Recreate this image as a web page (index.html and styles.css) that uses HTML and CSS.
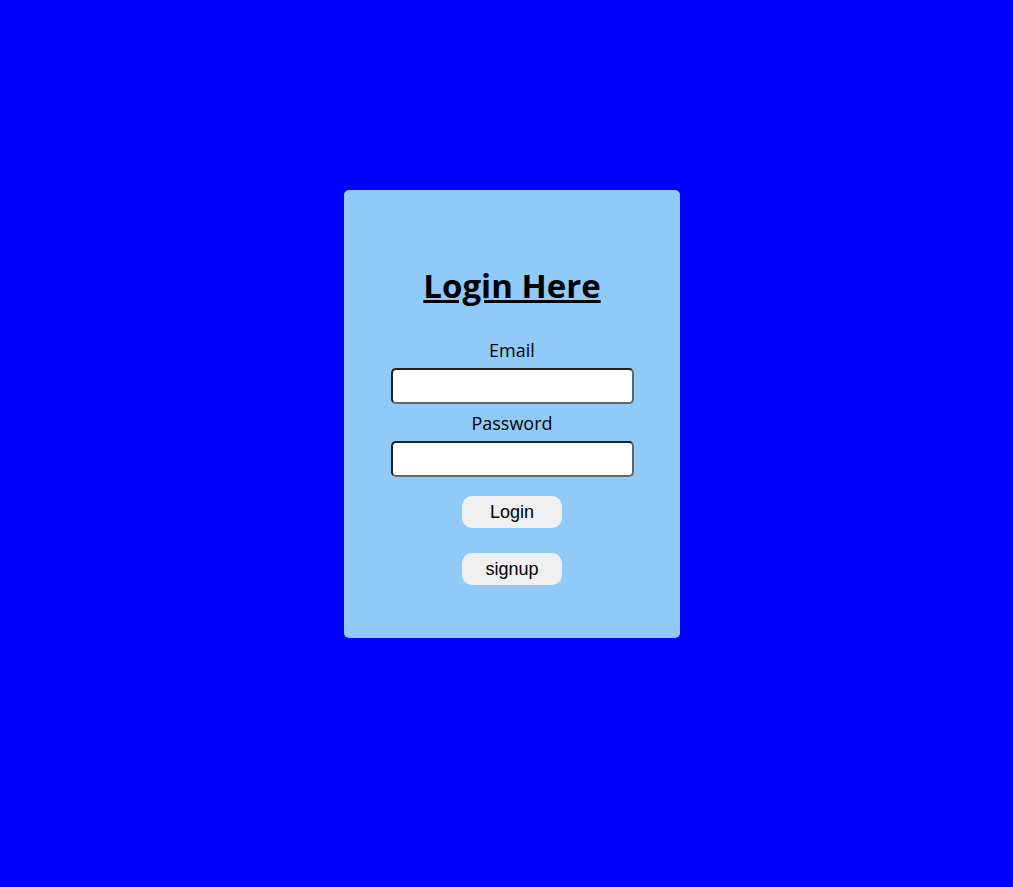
FILE: index.html
```html
<!DOCTYPE html>
<html>
<head>
<meta charset="utf-8">
<link rel="stylesheet" href="styles.css">
</head>
<body>
<div class="page">
  <div class="card">
    <h1 class="title">Login Here</h1>
    <form class="form">
      <label class="label" for="email">Email</label>
      <input class="field" id="email" type="email">
      <label class="label" for="password">Password</label>
      <input class="field" id="password" type="password">
      <button class="btn btn-login" type="button">Login</button>
      <button class="btn" type="button">signup</button>
    </form>
  </div>
</div>
</body>
</html>
```
FILE: styles.css
```css
html, body {
  margin: 0;
  padding: 0;
  background: #0000ff;
  height: 100%;
}
.page {
  padding: 190px 0 0 344px;
}
.card {
  width: 336px;
  height: 448px;
  box-sizing: border-box;
  background: #90caf9;
  border-radius: 5px;
  padding-top: 74px;
  font-family: "Open Sans", "Noto Sans", sans-serif;
  text-align: center;
}
.title {
  margin: 0;
  font-size: 33px;
  font-weight: 700;
  text-decoration: underline;
  line-height: 44px;
  color: #000;
}
.form {
  margin-top: 30px;
  display: flex;
  flex-direction: column;
  align-items: center;
}
.label {
  font-size: 18px;
  line-height: 24px;
  color: #000;
}
.field {
  width: 243px;
  height: 36px;
  box-sizing: border-box;
  border: 2px solid #222;
  border-bottom-color: #666;
  border-right-color: #666;
  border-radius: 5px;
  background: #fff;
  margin: 6px 0 7px;
}
.btn {
  width: 100px;
  height: 32px;
  border: none;
  border-radius: 10px;
  background: #efefef;
  font-family: "Liberation Sans", Arial, sans-serif;
  font-size: 18px;
  color: #000;
  margin-top: 12px;
}
.btn-login {
  margin-bottom: 13px;
}
```
